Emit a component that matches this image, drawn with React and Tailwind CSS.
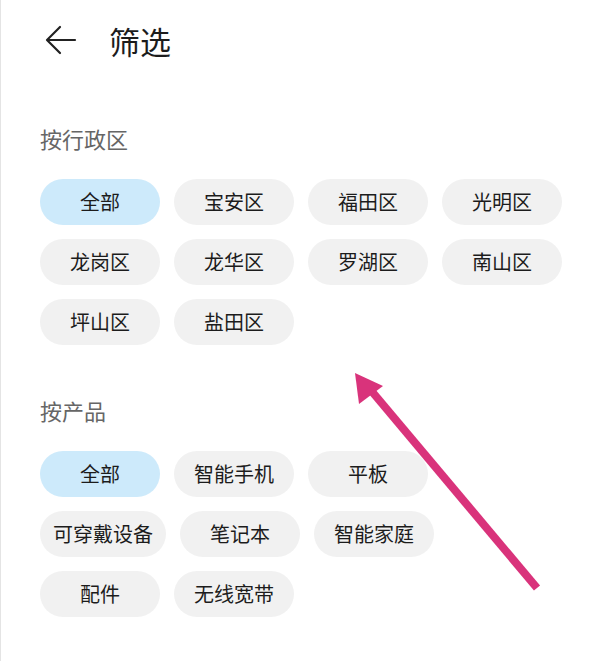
const districts = ['全部', '宝安区', '福田区', '光明区', '龙岗区', '龙华区', '罗湖区', '南山区', '坪山区', '盐田区']
const products = ['全部', '智能手机', '平板', '可穿戴设备', '笔记本', '智能家庭', '配件', '无线宽带']

const font = { fontFamily: '"Noto Sans CJK SC", "Noto Sans", sans-serif' }

function Chip({ label, active }) {
  return (
    <div
      className={`flex h-[46px] min-w-[120px] items-center justify-center rounded-full px-[13px] text-[20px] text-[#1c1c1c] ${
        active ? 'bg-[#cdeafb]' : 'bg-[#f1f1f1]'
      }`}
    >
      {label}
    </div>
  )
}

function Group({ title, items }) {
  return (
    <section>
      <h2 className="text-[22px] leading-[28px] text-[#666]">{title}</h2>
      <div className="mt-[27px] flex w-[524px] flex-wrap gap-x-[14px] gap-y-[14px]">
        {items.map((item, i) => (
          <Chip key={item} label={item} active={i === 0} />
        ))}
      </div>
    </section>
  )
}

export default function App() {
  return (
    <div className="relative h-[661px] w-[600px] overflow-hidden border-l border-[#e4e4e4] bg-white" style={font}>
      <header className="flex h-[80px] items-center pl-[44px]">
        <svg width="32" height="32" viewBox="0 0 32 32" fill="none" stroke="#222" strokeWidth="2.2" strokeLinecap="round" strokeLinejoin="round">
          <path d="M30 16H3" />
          <path d="M15 3L2 16l13 13" />
        </svg>
        <h1 className="ml-[32px] text-[31px] leading-none text-[#1c1c1c]">筛选</h1>
      </header>

      <div className="space-y-[51px] pl-[39px] pt-[44px]">
        <Group title="按行政区" items={districts} />
        <Group title="按产品" items={products} />
      </div>

      <svg className="pointer-events-none absolute left-0 top-0" width="600" height="661" viewBox="0 0 600 661">
        <line x1="536" y1="588" x2="368" y2="388" stroke="#d9337b" strokeWidth="8" />
        <polygon points="354,373 382,386 358,404" fill="#d9337b" />
      </svg>
    </div>
  )
}
